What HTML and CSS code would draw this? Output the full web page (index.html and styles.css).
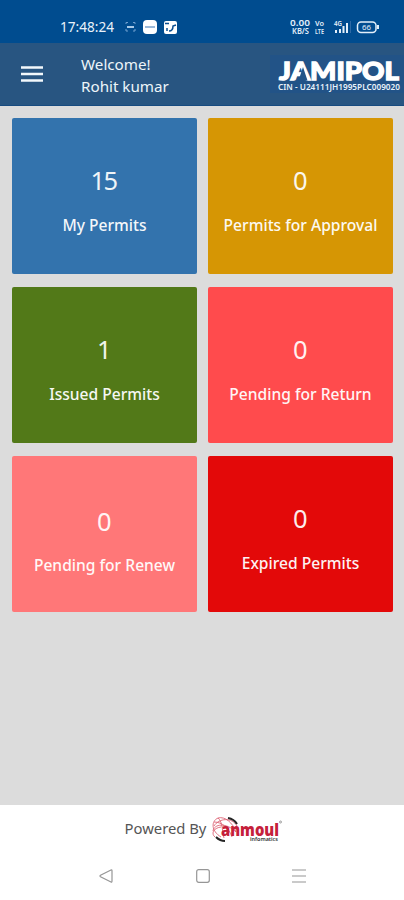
FILE: index.html
```html
<!DOCTYPE html>
<html lang="en">
<head>
<meta charset="utf-8">
<title>Permits</title>
<link rel="stylesheet" href="styles.css">
</head>
<body>
<div class="screen">
  <div class="status">
    <span class="clock">17:48:24</span>
    <svg class="notes" width="52" height="18" viewBox="0 0 52 18">
      <g fill="none" stroke="#6f9fce" stroke-width="1"><path d="M1 6V4.500H3M8 4.500H10V6M1 11v2H3M8 13h2V11"/><path d="M2 9H9" stroke="#a9c9e6" stroke-width="2"/></g>
      <rect x="18" y="2" width="14" height="14" rx="4" fill="#fff"/><path d="M20 9H30" stroke="#7ba2cb" stroke-width="1.500"/>
      <rect x="39" y="3" width="13" height="13" rx="2" fill="#fff"/><path d="M40 5.500h4M44 13c3 0 4-2 4-5l3-1M42 10v3" stroke="#0b4e90" stroke-width="1.500" fill="none"/>
    </svg>
    <svg class="signals" width="92" height="20" viewBox="0 0 92 20">
      <g fill="#e3effa" font-family="Noto Sans" font-weight="600">
        <text x="0" y="9" font-size="9" textLength="20" lengthAdjust="spacingAndGlyphs">0.00</text>
        <text x="2" y="16.500" font-size="8" textLength="17" lengthAdjust="spacingAndGlyphs">KB/S</text>
        <text x="25" y="9" font-size="7.500" textLength="9" lengthAdjust="spacingAndGlyphs">Vo</text>
        <text x="25" y="16.500" font-size="7.500" textLength="9" lengthAdjust="spacingAndGlyphs">LTE</text>
        <text x="44" y="9" font-size="7" textLength="8" lengthAdjust="spacingAndGlyphs">4G</text>
        <text x="72" y="13" font-size="7" font-weight="400" textLength="9" lengthAdjust="spacingAndGlyphs">66</text>
      </g>
      <path d="M46 16v-3M50 16v-4M53.500 16V9M57 16V6" stroke="#e3effa" stroke-width="2"/>
      <path d="M60.500 4V16" stroke="#2e69a5"/>
      <rect x="67.500" y="5" width="18.500" height="10.500" rx="3.500" fill="none" stroke="#e3effa" stroke-width="1.500"/>
      <path d="M88 8v4" stroke="#e3effa" stroke-width="2"/>
    </svg>
  </div>
  <header class="bar">
    <svg class="menu" width="22" height="16" viewBox="0 0 22 16"><path d="M0 1.500H22M0 8H22M0 14.500H22" stroke="#f2f8fc" stroke-width="2.500"/></svg>
    <div class="greeting">Welcome!<br>Rohit kumar</div>
    <svg class="brand" width="134" height="38" viewBox="0 0 134 38">
      <rect width="134" height="38" fill="#225387"/>
      <text x="9" y="24.500" font-family="Lato" font-weight="900" font-size="25.500" fill="#fff" stroke="#fff" stroke-width="1.300" textLength="120" lengthAdjust="spacingAndGlyphs">JAMIPOL</text>
      <path d="M33 12L37.500 25.500H28.500Z" fill="#225387"/>
      <text x="8" y="35" font-family="Noto Sans" font-weight="600" fill="#e8f2fa" font-size="8" textLength="122" lengthAdjust="spacingAndGlyphs">CIN - U24111JH1995PLC009020</text>
    </svg>
  </header>
  <main class="tiles">
    <section class="tile blue"><b>15</b><span>My Permits</span></section>
    <section class="tile amber"><b>0</b><span>Permits for Approval</span></section>
    <section class="tile green"><b>1</b><span>Issued Permits</span></section>
    <section class="tile coral"><b>0</b><span>Pending for Return</span></section>
    <section class="tile pink"><b>0</b><span>Pending for Renew</span></section>
    <section class="tile red"><b>0</b><span>Expired Permits</span></section>
  </main>
  <footer class="powered">
    <span>Powered By</span>
    <svg width="72" height="28" viewBox="0 0 72 28">
      <g fill="none" stroke="#dc6375" stroke-width=".9">
        <path d="M10 22C0 16 0 6 7 3c7-2 15 5 18 14M3 11C8 3 21 2 26 11M2 16C3 9 15 7 25 17M4 22c-4-3-2-9 6-10M7 3c5 4 4 14 6 20M3 7c8 0 15 6 18 15"/>
      </g>
      <path d="M17 3q6 1 9 6M5 22q4 4 9 4" stroke="#252525" stroke-width="2" fill="none"/>
      <text x="10" y="20.500" font-family="Open Sans" font-size="17" font-weight="800" fill="#c5203a" textLength="58" lengthAdjust="spacingAndGlyphs">anmoul</text>
      <text x="39" y="26" font-family="Noto Sans" font-size="5.500" font-weight="600" fill="#333" textLength="28" lengthAdjust="spacingAndGlyphs">infomatics</text>
      <circle cx="69.500" cy="7" r="1" fill="none" stroke="#777" stroke-width=".7"/>
    </svg>
  </footer>
  <nav class="nav">
    <svg width="14" height="14" viewBox="0 0 14 14"><path d="M12 1Q13 .5 13 2V12Q13 13.500 12 13L1.500 7.700Q.5 7 1.500 6.300Z"/></svg>
    <svg width="14" height="14" viewBox="0 0 14 14"><rect x=".7" y=".7" width="12.600" height="12.600" rx="2"/></svg>
    <svg width="14" height="14" viewBox="0 0 14 14"><path d="M0 1H14M0 7H14M0 13H14"/></svg>
  </nav>
</div>
</body>
</html>
```
FILE: styles.css
```css
* { box-sizing: border-box; }
body { margin: 0; font-family: "Noto Sans", sans-serif; }
.screen { width: 404px; height: 900px; display: flex; flex-direction: column; background: #dcdcdc; }
.status { height: 43px; padding: 10px 24px 0 60px; display: flex; align-items: center; background: #004c8f; color: #e8f2fa; }
.clock { width: 65px; font-size: 13.6px; white-space: nowrap; }
.signals { margin-left: auto; margin-right: -2px; }
.bar { height: 63px; padding-left: 21px; display: flex; align-items: center; background: #285581; border-bottom: 1px solid #174b80; }
.greeting { margin-left: 38px; padding-top: 3px; color: #edf5fa; font-size: 15.2px; line-height: 21.5px; }
.brand { margin-left: auto; }
.tiles { flex: 1; padding: 12px 11px 0 12px; display: grid; grid-template-columns: 185px 185px; grid-auto-rows: 156px; column-gap: 11px; row-gap: 13px; align-content: start; }
.tile { border-radius: 2px; padding-top: 45px; display: flex; flex-direction: column; align-items: center; color: #fff; }
.tile b { font-size: 25.5px; font-weight: 400; line-height: 34px; letter-spacing: -1.5px; margin-right: 2px; opacity: .92; }
.tile span { margin-top: 17px; font-size: 15.6px; font-weight: 500; line-height: 22px; opacity: .95; white-space: nowrap; }
.blue { background: #3373ad; }
.amber { background: #d69604; }
.green { background: #527918; }
.coral { background: #ff4b4d; }
.pink { background: #ff7778; padding-top: 48px; }
.pink span { margin-top: 16px; }
.red { background: #e30909; }
.powered { height: 47px; padding-left: 4px; display: flex; align-items: center; justify-content: center; gap: 5px; background: #fff; color: #555; font-size: 14.8px; }
.powered span { margin-top: -2px; }
.nav { height: 48px; padding: 0 98px 0 99px; display: flex; align-items: center; justify-content: space-between; background: #fff; }
.nav svg { fill: none; stroke: #969696; stroke-width: 1.2; }
```
